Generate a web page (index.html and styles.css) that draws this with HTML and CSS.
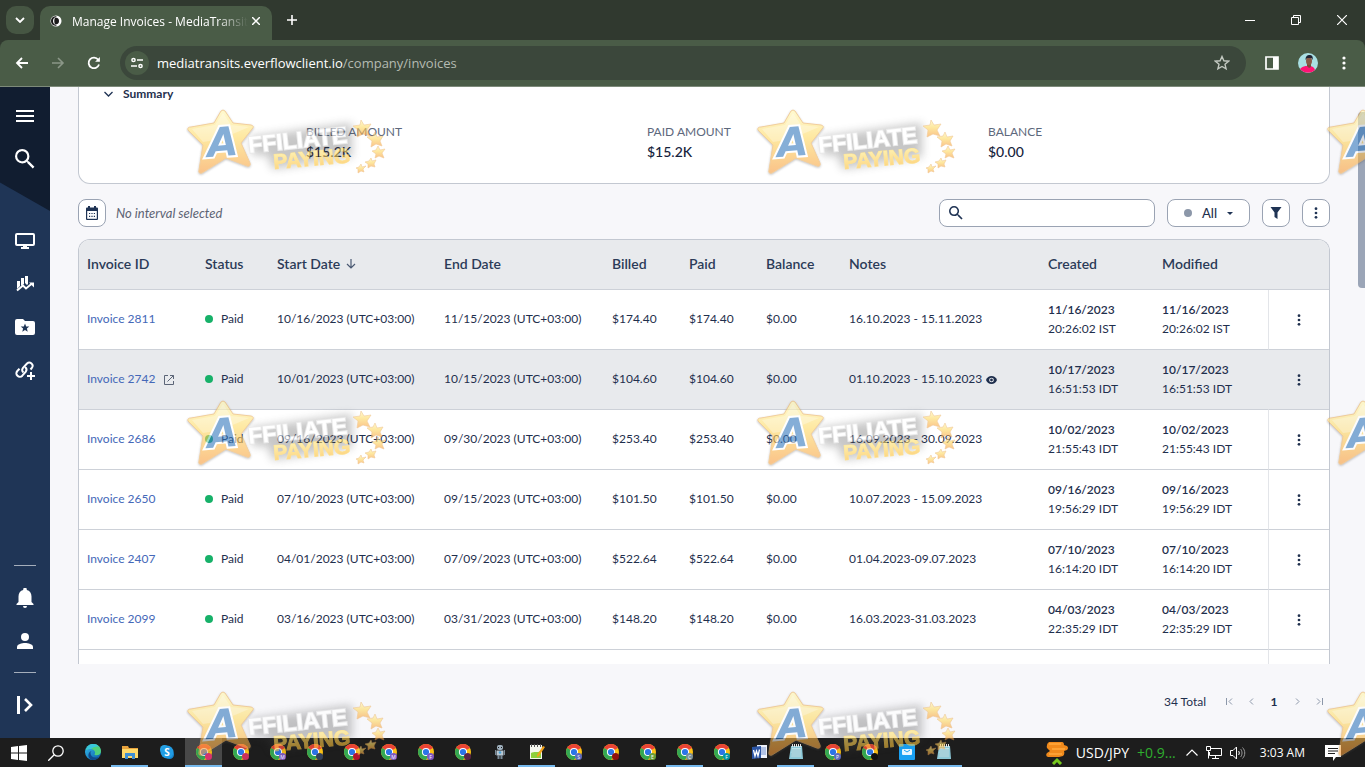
FILE: index.html
```html
<!DOCTYPE html>
<html lang="en">
<head>
  <meta charset="UTF-8">
  <meta name="viewport" content="width=device-width, initial-scale=1.0">
  <title>Manage Invoices - MediaTransits</title>
  <link rel="stylesheet" href="styles.css">
</head>
<body>
  <!-- Shared icons -->
  <svg class="defs" width="0" height="0" aria-hidden="true">
    <defs>
      <linearGradient id="gold" x1="0" y1="0" x2="0" y2="1">
        <stop offset="0" stop-color="#fff6b0"/>
        <stop offset="0.45" stop-color="#fdd860"/>
        <stop offset="1" stop-color="#f79a3a"/>
      </linearGradient>
      <linearGradient id="goldText" x1="0" y1="0" x2="0" y2="1">
        <stop offset="0" stop-color="#fff08a"/>
        <stop offset="1" stop-color="#fbb324"/>
      </linearGradient>
      <linearGradient id="edgeBlue" x1="0" y1="0" x2="1" y2="1">
        <stop offset="0" stop-color="#35c1f1"/>
        <stop offset="1" stop-color="#0c59a4"/>
      </linearGradient>
      <filter id="soft" x="-20%" y="-50%" width="140%" height="200%"><feGaussianBlur stdDeviation="5"/></filter>
      <filter id="shade" x="-20%" y="-20%" width="140%" height="140%"><feDropShadow dx="0" dy="1" stdDeviation="1" flood-color="#555" flood-opacity="0.6"/></filter>
      <symbol id="dots" viewBox="0 0 4 14"><circle cx="2" cy="2" r="1.6"/><circle cx="2" cy="7" r="1.6"/><circle cx="2" cy="12" r="1.6"/></symbol>
      <symbol id="search" viewBox="3 3 18 18"><path d="M15.5 14h-.79l-.28-.27A6.47 6.47 0 0 0 16 9.5 6.5 6.5 0 1 0 9.5 16c1.61 0 3.09-.59 4.23-1.57l.27.28v.79l5 4.99L20.49 19l-4.99-5zm-6 0C7.01 14 5 11.99 5 9.5S7.01 5 9.5 5 14 7.01 14 9.5 11.99 14 9.5 14z"/></symbol>
      <symbol id="chrome" viewBox="0 0 16 16">
        <circle cx="8" cy="8" r="8" fill="#fbc116"/>
        <path d="M8 8 1.1 4A8 8 0 0 1 14.9 4z" fill="#ea4335"/>
        <path d="M1.1 4A8 8 0 0 0 8 16l3.4-6-3.4-2z" fill="#34a853"/>
        <circle cx="8" cy="8" r="4.1" fill="#fff"/>
        <circle cx="8" cy="8" r="3.1" fill="#2b75e8"/>
      </symbol>
      <symbol id="edge" viewBox="0 0 16 16">
        <circle cx="8" cy="8" r="8" fill="url(#edgeBlue)"/>
        <path d="M1 6C2 2 5 0 8.500 0 13 0 16 3.500 16 7c0 3-2 4.300-4.500 4.300-1.300 0-2-.5-2-.9 0-.4.6-.7.6-1.800C10 6.500 8 5 5.500 5 3.500 5 2 5.500 1 6z" fill="#4fd07d"/>
        <path d="M1 6C2 2 5 0 8 0c3 0 5 1 6 3-2-1-6 0-8 2-2 0-4 0-5 1z" fill="#38c6dd"/>
        <path d="M5.500 9c0 3.500 3 5.500 8.500 4-2 2.500-5 3-7 2.900C4 15 2.500 12 4 9c.6-1.100 1.500-1.800 2.500-2C6 7.500 5.500 8 5.500 9z" fill="#114a8b"/>
      </symbol>
      <symbol id="folder" viewBox="0 0 16 16">
        <path d="M0 2h6l1 2h9v10H0z" fill="#e8a33d"/>
        <path d="M0 5h16v9H0z" fill="#ffd96a"/>
        <path d="M3 9h10v6h-3v-3H6v3H3z" fill="#3f8fd2"/>
      </symbol>
      <symbol id="skype" viewBox="0 0 16 16"><circle cx="5.500" cy="5.500" r="4.500" fill="#2aa5e6"/><circle cx="10.500" cy="10.500" r="4.500" fill="#1687d0"/><circle cx="8" cy="8" r="6.500" fill="#219ce4"/></symbol>
      <symbol id="robot" viewBox="0 0 16 16"><rect x="5" y="1" width="6" height="5" rx="2" fill="#9fb0bd"/><path d="M6 3h1v1H6zM9 3h1v1H9z" fill="#1d1d1d"/><path d="M4.500 6.500h7v5h-7z" fill="#b9c7d1"/><circle cx="8" cy="8.500" r="1.300" fill="#49a2d6"/><path d="M3 6h1v5H3zM12 6h1v5h-1zM5.500 11h2v4h-2zM8.500 11h2v4h-2z" fill="#7b8b98"/></symbol>
      <symbol id="npp" viewBox="0 0 16 16"><path d="M1 1h12v14H1z" fill="#f4f6ee"/><path d="M2 9c3-2 6 0 10-2v7H2z" fill="#8ecf3c"/><path d="M2 0h1v3H2zM5 0h1v3H5zM8 0h1v3H8zM11 0h1v3h-1z" fill="#555"/><path d="m14 2 2 1-6 9-2 1v-2z" fill="#f2a21b"/></symbol>
      <symbol id="word" viewBox="0 0 16 16"><path d="M6 1h10v13H6z" fill="#eef2fb"/><path d="M8 4h7M8 6h7M8 8h7M8 10h7" stroke="#7794cf"/><path d="m1 3 9-1v12l-9 1z" fill="#2c55a4"/><path d="m2.500 6 1.500 6 1.500-5L7 12l1.500-6.500" fill="none" stroke="#fff" stroke-width="1.300"/></symbol>
      <symbol id="notepad" viewBox="0 0 16 16"><path d="M3 2h11l1 13H1z" fill="#8ec9d8"/><path d="M4 4h9v9H3z" fill="#bfe3ea"/><path d="M4 6h9M4 8h9M3 10h10M3 12h10" stroke="#6ea9ba" stroke-width=".6"/><path d="M4 0h1v3H4zM6 0h1v3H6zM8 0h1v3H8zM10 0h1v3h-1zM12 0h1v3h-1z" fill="#e8e8e8"/></symbol>
      <symbol id="mail" viewBox="0 0 16 16"><rect width="16" height="16" rx="1" fill="#1aa1f3"/><rect x="3" y="5" width="10" height="6" rx="1" fill="#e8f6ff"/><path d="m5 6 3 2 3-2" fill="none" stroke="#1aa1f3"/></symbol>
    </defs>
  </svg>

  <!-- Browser tabs -->
  <header class="tab-strip">
    <button class="tab-search" aria-label="Search tabs"><svg width="10" height="6" viewBox="0 0 10 6"><path d="m1 1 4 4 4-4" fill="none" stroke="#fff" stroke-width="1.800"/></svg></button>
    <div class="tab">
      <svg width="12" height="12" viewBox="0 0 12 12"><circle cx="6" cy="6" r="5.500" fill="#fff"/><path d="M7 1.500C4 2 3 4 3 6s1 4 4 4.500C3 11.500 1 9 1 6s2-5.500 6-4.500z" fill="#1a1a1a"/><path d="M5 2.500c3 0 4 1.500 4 3.500S8 9.500 5 9.500c-1-2-1-5 0-7z" fill="#1a1a1a"/></svg>
      <span class="tab-title">Manage Invoices - MediaTransit</span>
      <button aria-label="Close tab"><svg width="8" height="8" viewBox="0 0 8 8"><path d="m0 0 8 8M8 0 0 8" stroke="#fff" stroke-width="1.500"/></svg></button>
    </div>
    <button class="new-tab" aria-label="New tab"><svg width="10" height="10" viewBox="0 0 10 10"><path d="M5 0v10M0 5h10" stroke="#fff" stroke-width="1.600"/></svg></button>
    <div class="window-buttons">
      <button aria-label="Minimize"><svg width="10" height="10" viewBox="0 0 10 10"><path d="M0 5.500h10" stroke="#fff"/></svg></button>
      <button aria-label="Restore"><svg width="10" height="10" viewBox="0 0 10 10"><path d="M.5 2.500h7v7h-7zM2.500 2.500v-2h7v7h-2" fill="none" stroke="#fff"/></svg></button>
      <button aria-label="Close"><svg width="10" height="10" viewBox="0 0 10 10"><path d="m0 0 10 10M10 0 0 10" stroke="#fff" stroke-width="1.200"/></svg></button>
    </div>
  </header>

  <!-- Address bar -->
  <div class="toolbar">
    <button aria-label="Back"><svg width="14" height="12" viewBox="0 0 14 12"><path d="M13 6H2M7 1 2 6l5 5" fill="none" stroke="#fff" stroke-width="1.800"/></svg></button>
    <button aria-label="Forward"><svg width="14" height="12" viewBox="0 0 14 12"><path d="M1 6h11M7 1l5 5-5 5" fill="none" stroke="#8b9788" stroke-width="1.600"/></svg></button>
    <button aria-label="Reload"><svg width="14" height="14" viewBox="0 0 14 14"><path d="M12 8.500A5.300 5.300 0 1 1 11.200 3.700" fill="none" stroke="#fff" stroke-width="1.800"/><path d="M12.900 1v4.800H8.100z" fill="#fff"/></svg></button>
    <div class="address">
      <button class="site-info" aria-label="Site information"><svg width="12" height="12" viewBox="0 0 12 12" fill="none" stroke="#fff" stroke-width="1.500"><circle cx="2.500" cy="3" r="1.600"/><path d="M6 3h6M0 9h6"/><circle cx="9.500" cy="9" r="1.600"/></svg></button>
      <span class="url">mediatransits.everflowclient.io<span>/company/invoices</span></span>
      <button class="bookmark" aria-label="Bookmark"><svg width="16" height="16" viewBox="0 0 16 16"><path d="m8 1.500 1.900 4.300 4.700.4-3.600 3.100 1.100 4.600L8 11.500l-4.100 2.400L5 9.300 1.400 6.200l4.700-.4z" fill="none" stroke="#c3c9c1" stroke-width="1.400"/></svg></button>
    </div>
    <button aria-label="Side panel"><svg width="14" height="14" viewBox="0 0 14 14"><path d="M1 1h12v12H1z" fill="none" stroke="#fff" stroke-width="1.700"/><path d="M8 1h5v12H8z" fill="#fff"/></svg></button>
    <button aria-label="Profile"><svg width="20" height="20" viewBox="0 0 20 20"><circle cx="10" cy="10" r="10" fill="#a9dfe3"/><path d="M2 16c3-3 5-3 7-3h3c2 0 4 1 5 4a10 10 0 0 1-14 0z" fill="#ff1374"/><path d="M9 10h4v4l-2 1-2-2z" fill="#7a4a3a"/><ellipse cx="11" cy="8" rx="3" ry="4" fill="#8a5a48"/><path d="M7.500 7c0-4 2-5 4-5s4 1 3 5l-1-2H9z" fill="#202334"/></svg></button>
    <button aria-label="Browser menu"><svg width="4" height="14" fill="#fff"><use href="#dots"/></svg></button>
  </div>

  <div class="page">
    <!-- Sidebar -->
    <nav class="sidebar">
      <div class="sidebar-top">
        <button aria-label="Menu"><svg width="18" height="12" viewBox="0 0 18 12"><path d="M0 1h18M0 6h18M0 11h18" stroke="#fff" stroke-width="2"/></svg></button>
        <button aria-label="Search"><svg width="20" height="20" fill="#fff"><use href="#search"/></svg></button>
      </div>
      <div class="sidebar-links">
        <button aria-label="Dashboard"><svg width="20" height="18" viewBox="0 0 20 18"><path d="M2 2h16a1 1 0 0 1 1 1v9a1 1 0 0 1-1 1H2a1 1 0 0 1-1-1V3a1 1 0 0 1 1-1z" fill="none" stroke="#fff" stroke-width="2"/><path d="M8 13h4v2h2v2H6v-2h2z" fill="#fff"/></svg></button>
        <button aria-label="Reporting"><svg width="18" height="16" viewBox="0 0 18 16"><path d="M1 5h3v5l-3 3zM5 2h3v6L5 10zM9 0h3v8l-1 1-2-2z" fill="#fff"/><path d="m1 14.500 6-5 3 3 6-5" fill="none" stroke="#fff" stroke-width="2"/><path d="M13 6.500h5v5z" fill="#fff"/></svg></button>
        <button aria-label="Offers"><svg width="20" height="16" viewBox="0 0 20 16"><path d="M2 0h6l2 2h8a2 2 0 0 1 2 2v10a2 2 0 0 1-2 2H2a2 2 0 0 1-2-2V2a2 2 0 0 1 2-2z" fill="#fff"/><path d="m10 4.500 1.200 2.900 3.100.2-2.400 2 .8 3.100-2.700-1.700-2.700 1.700.8-3.100-2.400-2 3.100-.2z" fill="#1f3556"/></svg></button>
        <button aria-label="Links"><svg width="20" height="20" viewBox="0 0 20 20" fill="none" stroke="#fff" stroke-width="2"><path d="M8.500 12.500a3.500 3.500 0 0 1-.5-4.700l4-4.300a3.300 3.300 0 0 1 4.800 4.500L15.500 9.500"/><path d="M10 7a3.500 3.500 0 0 1 .8 4.700l-3.500 4A3.300 3.300 0 0 1 2.300 11L4.500 8.700"/><path d="M16 12v8M12 16h8"/></svg></button>
      </div>
      <div class="sidebar-bottom">
        <hr>
        <button aria-label="Notifications"><svg width="18" height="20" viewBox="0 0 18 20"><path d="M9 20a2 2 0 0 0 2-2H7a2 2 0 0 0 2 2zm6.500-6V8.500c0-3.300-1.700-5.800-4.700-6.500V1.500a1.800 1.800 0 0 0-3.600 0V2C4.200 2.700 2.500 5.200 2.500 8.500V14l-2 2v1h17v-1z" fill="#fff"/></svg></button>
        <button aria-label="Account"><svg width="16" height="16" viewBox="0 0 16 16"><circle cx="8" cy="4" r="4" fill="#fff"/><path d="M0 16v-2c0-3 5-4 8-4s8 1 8 4v2z" fill="#fff"/></svg></button>
        <hr>
        <button aria-label="Expand"><svg width="16" height="18" viewBox="0 0 16 18" fill="none" stroke="#fff"><path d="M1.500 0v18" stroke-width="3"/><path d="m8 3 6 6-6 6" stroke-width="2.600"/></svg></button>
      </div>
    </nav>

    <main class="content">
      <section class="summary">
        <button class="summary-toggle"><svg width="9" height="6" viewBox="0 0 9 6"><path d="m.5 1 4 4 4-4" fill="none" stroke="#1f3354" stroke-width="1.300"/></svg>Summary</button>
        <dl class="amounts">
          <div><dt>BILLED AMOUNT</dt><dd>$15.2K</dd></div>
          <div><dt>PAID AMOUNT</dt><dd>$15.2K</dd></div>
          <div><dt>BALANCE</dt><dd>$0.00</dd></div>
        </dl>
      </section>

      <div class="filters">
        <button class="box" aria-label="Select interval"><svg width="12" height="14" viewBox="0 0 12 14"><path d="M2 0h2v1.500h4V0h2v1.500h1a1 1 0 0 1 1 1V13a1 1 0 0 1-1 1H1a1 1 0 0 1-1-1V2.500a1 1 0 0 1 1-1h1z" fill="#1f3354"/><path d="M1.200 5h9.600v7.800H1.200z" fill="#fff"/><path d="M3 7.500h1.200m1.200 0h1.200m1.200 0H9M3 10.300h1.200m1.200 0h1.200m1.200 0H9" stroke="#1f3354" stroke-width="1.200"/></svg></button>
        <em>No interval selected</em>
        <label class="search-box">
          <svg width="14" height="14" fill="#1f3354"><use href="#search"/></svg>
          <input type="text" aria-label="Search invoices">
        </label>
        <button class="box status-filter"><i></i>All<svg width="6" height="3" viewBox="0 0 6 3"><path d="M0 0h6L3 3z" fill="#1f3354"/></svg></button>
        <button class="box" aria-label="Filter"><svg width="12" height="12" viewBox="0 0 12 12"><path d="M.5 0h11L7.500 5.500V12l-3-2V5.500z" fill="#1f3354"/></svg></button>
        <button class="box" aria-label="More actions"><svg width="4" height="12" fill="#1f3354"><use href="#dots"/></svg></button>
      </div>

      <div class="table-wrap">
        <table id="invoiceTable">
          <colgroup>
            <col class="c-id"><col class="c-status"><col class="c-start"><col class="c-end"><col class="c-money"><col class="c-money"><col class="c-balance"><col><col class="c-date"><col class="c-date"><col class="c-menu">
          </colgroup>
          <thead>
            <tr>
              <th>Invoice ID</th>
              <th>Status</th>
              <th>Start Date <svg class="sort-icon" width="10" height="10" viewBox="0 0 10 10"><path d="M5 0v9M1 5l4 4 4-4" fill="none" stroke="#4a5972" stroke-width="1.200"/></svg></th>
              <th>End Date</th>
              <th>Billed</th>
              <th>Paid</th>
              <th>Balance</th>
              <th>Notes</th>
              <th>Created</th>
              <th>Modified</th>
              <th></th>
            </tr>
          </thead>
          <tbody></tbody>
        </table>
      </div>

      <footer class="pager">
        <span>34 Total</span>
        <button aria-label="First page"><svg width="7" height="7" viewBox="0 0 7 7"><path d="M.5 0v7M6 .5l-3 3 3 3"/></svg></button>
        <button aria-label="Previous page"><svg width="7" height="7" viewBox="0 0 7 7"><path d="m5 .5-3 3 3 3"/></svg></button>
        <button class="current">1</button>
        <button aria-label="Next page"><svg width="7" height="7" viewBox="0 0 7 7"><path d="m2 .5 3 3-3 3"/></svg></button>
        <button aria-label="Last page"><svg width="7" height="7" viewBox="0 0 7 7"><path d="M6.500 0v7M1 .5l3 3-3 3"/></svg></button>
      </footer>
      <div class="scroll-thumb"></div>
    </main>
  </div>

  <!-- Taskbar -->
  <footer class="taskbar">
    <button aria-label="Start"><svg width="16" height="16" viewBox="0 0 16 16"><path d="m0 2 7-1v6.600H0zM8 1l8-1v7.600H8zM0 8.500h7V15l-7-1zM8 8.500h8V16l-8-1z" fill="#fff"/></svg></button>
    <button aria-label="Search"><svg width="16" height="16" viewBox="0 0 16 16" fill="none" stroke="#fff" stroke-width="1.300"><circle cx="10" cy="6" r="5.200"/><path d="m6.200 9.800-6 6"/></svg></button>
    <div class="apps" id="apps"></div>
    <div class="tray">
      <svg width="22" height="24" viewBox="0 0 22 24"><path d="M3 1h13q2 0 2 3l3 1q2 2 0 4l-3 1q1 3-1 5l-4 1H2q-3-1-1-4l3-2-3-3q-1-4 2-6z" fill="#f08a1c"/><path d="M3 3h12M6 8h13M3 13h13" stroke="#ffa93c" stroke-width="1.500"/><path d="m7 23 4-4 4 4" fill="none" stroke="#76c81e" stroke-width="3"/></svg>
      <span class="quote">USD/JPY</span>
      <span class="quote up">+0.9...</span>
      <svg width="12" height="7" viewBox="0 0 12 7"><path d="m.5 6.500 5.500-5.500 5.500 5.500" fill="none" stroke="#fff" stroke-width="1.200"/></svg>
      <svg width="16" height="14" viewBox="0 0 16 14" fill="none" stroke="#fff"><path d="M5 2.500h10.500v7H3.500V6M6 12.500h7M9.500 9.500v3M.5.500h4v4h-4zM2.500 4.500v8"/></svg>
      <svg width="16" height="14" viewBox="0 0 16 14" fill="none" stroke="#fff"><path d="M.5 4.500H3l3.500-3.500v12L3 9.500H.5zM8.500 5c1 1 1 3 0 4"/><path d="M10.500 3c2 2 2 6 0 8M12.500 1.500c3 3 3 8 0 11" stroke="#999"/></svg>
      <time>3:03 AM</time>
      <svg width="16" height="16" viewBox="0 0 16 16"><path d="M0 0h16v12h-5l-3 4v-4H0z" fill="#fff"/><path d="M3 3.500h10M3 6h10M3 8.500h7" stroke="#1d1d1d"/></svg>
    </div>
  </footer>

  <!-- Watermark tile, repeated over the whole screen -->
  <div class="watermarks" id="watermarks" aria-hidden="true"></div>
  <template id="watermark">
    <svg class="watermark" width="210" height="80" viewBox="0 0 210 80">
      <path d="M64 32 166 18v34L86 64l-4-14H66z" fill="#444" opacity="0.5" filter="url(#soft)"/>
      <path d="M35 6q2-2 4 0l8 12 18 2q4 1 1 4L55 38l9 20q1 4-3 3L40 53 16 68q-4 1-3-3l4-25L2 25q-1-3 3-3l23-4z" fill="url(#gold)" stroke="#e9ae5c" filter="url(#shade)"/>
      <path d="m37 8 8 12 18 2-14 6q-20 8-32 9L6 24l23-4z" fill="#fff" opacity="0.300"/>
      <text class="wm-top" transform="translate(63 48) rotate(-6)">FFILIATE</text>
      <text class="wm-bottom" transform="translate(88 64) rotate(-5)">PAYING</text>
      <text class="wm-a" transform="translate(22 52) rotate(-4)">A</text>
      <g fill="url(#gold)" stroke="#e8a552" stroke-width=".6">
        <path d="m175 15 3 5 7-1-4 6 3 6-7-2-6 3 1-7-5-4 7-1z"/>
        <path d="m189 27 2 5 6-1-3 5 2 5-6-2-5 3 1-6-5-4 6-1z"/>
        <path d="m192 41 2 4 5-1-3 4 2 5-5-2-4 2 1-4-4-3 4-1z"/>
        <path d="m185 53 1 3 4-1-2 4 1 3-4-1-3 2v-4l-3-2 4-1z"/>
        <path d="m175 59 1 3 4-1-3 3 1 3-3-1-3 2v-4l-2-1 3-1z"/>
      </g>
    </svg>
  </template>

  <script>
    const invoices = [
      { id: 2811, start: "10/16/2023", end: "11/15/2023", amount: "$174.40", notes: "16.10.2023 - 15.11.2023", date: "11/16/2023", time: "20:26:02 IST" },
      { id: 2742, start: "10/01/2023", end: "10/15/2023", amount: "$104.60", notes: "01.10.2023 - 15.10.2023", date: "10/17/2023", time: "16:51:53 IDT", active: true },
      { id: 2686, start: "09/16/2023", end: "09/30/2023", amount: "$253.40", notes: "16.09.2023 - 30.09.2023", date: "10/02/2023", time: "21:55:43 IDT" },
      { id: 2650, start: "07/10/2023", end: "09/15/2023", amount: "$101.50", notes: "10.07.2023 - 15.09.2023", date: "09/16/2023", time: "19:56:29 IDT" },
      { id: 2407, start: "04/01/2023", end: "07/09/2023", amount: "$522.64", notes: "01.04.2023-09.07.2023", date: "07/10/2023", time: "16:14:20 IDT" },
      { id: 2099, start: "03/16/2023", end: "03/31/2023", amount: "$148.20", notes: "16.03.2023-31.03.2023", date: "04/03/2023", time: "22:35:29 IDT" }
    ];

    const openIcon = '<svg class="open-icon" width="10" height="10" viewBox="0 0 10 10"><path d="M4 .500H.500v9h9V6M6 .500h3.500V4M9.500.500l-6 6" fill="none" stroke="#5b6577"/></svg>';
    const eyeIcon = '<svg class="eye-icon" width="11" height="8" viewBox="0 0 11 8"><path d="M5.500 0C3 0 1 1.500 0 4c1 2.500 3 4 5.500 4S10 6.500 11 4C10 1.500 8 0 5.500 0z" fill="#1f2f4d"/><circle cx="5.500" cy="4" r="2.300" fill="#fff"/><circle cx="5.500" cy="4" r="1.400" fill="#1f2f4d"/></svg>';
    const tbody = document.querySelector("#invoiceTable tbody");

    // Add one row per invoice
    invoices.forEach(item => {
      const row = tbody.insertRow();
      if (item.active) row.className = "active";
      row.innerHTML = `
        <td><a href="#">Invoice ${item.id}</a>${item.active ? openIcon : ""}</td>
        <td><i class="paid-dot"></i>Paid</td>
        <td>${item.start} (UTC+03:00)</td>
        <td>${item.end} (UTC+03:00)</td>
        <td>${item.amount}</td>
        <td>${item.amount}</td>
        <td>$0.00</td>
        <td>${item.notes}${item.active ? eyeIcon : ""}</td>
        <td><b>${item.date}</b>${item.time}</td>
        <td><b>${item.date}</b>${item.time}</td>
        <td class="menu-cell"><button aria-label="Invoice ${item.id} actions"><svg width="4" height="12" fill="#1f2f4d"><use href="#dots"/></svg></button></td>
      `;
    });
    // next row is cut off by the bottom of the table
    tbody.insertRow().innerHTML = "<td></td>".repeat(10) + '<td class="menu-cell"></td>';

    // icon, badge colour, badge letter, state
    const apps = [
      ["edge"], ["folder", "", "", "open"], ["skype", "", "S"],
      ["chrome", "#d8336f", "", "open focused"], ["chrome", "#c92f5c", ""], ["chrome", "#7e57c2", "M"],
      ["chrome", "#33415c", ""], ["chrome", "#b3142e", ""], ["chrome", "#7e57c2", "M"], ["chrome", "#7e57c2", "F"],
      ["chrome", "#5b2346", ""], ["robot"], ["npp", "", "", "open"], ["chrome", "#5c6bc0", "S"],
      ["chrome", "#8e1010", ""], ["chrome", "#689f38", "E"], ["chrome", "#78909c", "C", "open"], ["chrome", "#0097a7", "F"],
      ["word"], ["notepad", "", "", "open"], ["chrome", "#5c6bc0", "P"], ["chrome", "#111111", ""],
      ["mail", "", "", "open"], ["notepad", "", "", "open"]
    ];
    document.getElementById("apps").innerHTML = apps.map(([icon, color, letter, state]) => `
      <button class="app ${state || ""}" aria-label="${icon}">
        <svg width="18" height="18" viewBox="0 0 18 18">
          <use href="#${icon}" x="1" y="1" width="16" height="16"/>
          ${color ? `<circle cx="13.500" cy="13.500" r="3.500" fill="${color}"/>` : ""}
          ${icon === "chrome" && letter ? `<text class="badge" x="13.500" y="15.500">${letter}</text>` : ""}
          ${icon === "skype" ? `<text class="skype-s" x="9" y="13">S</text>` : ""}
        </svg>
      </button>`).join("");

    const tile = document.getElementById("watermark");
    for (let i = 0; i < 9; i++) {
      document.getElementById("watermarks").appendChild(tile.content.cloneNode(true));
    }
    // only the star of the last column fits on screen
    document.querySelectorAll(".watermark:nth-child(3n) :is(.wm-top, .wm-bottom)").forEach(text => text.remove());
  </script>
</body>
</html>
```
FILE: styles.css
```css
* {
  box-sizing: border-box;
}

body {
  margin: 0;
  height: 100vh;
  display: flex;
  flex-direction: column;
  overflow: hidden;
  background-color: #30392f;
  font-family: Lato, sans-serif;
  font-size: 12px;
  color: #1f2f4d;
}

button {
  display: flex;
  align-items: center;
  justify-content: center;
  padding: 0;
  border: none;
  background: none;
  font: inherit;
  color: inherit;
  cursor: pointer;
}

svg {
  flex: none;
}

.defs {
  position: absolute;
}

/* Browser window */
.tab-strip {
  display: flex;
  height: 40px;
  flex: none;
  padding-left: 6px;
  color: #fff;
  font-family: "Open Sans", sans-serif;
}

.tab-search {
  width: 28px;
  height: 28px;
  margin-top: 6px;
  border-radius: 10px;
  background-color: #465643;
}

.tab {
  display: flex;
  align-items: center;
  gap: 10px;
  width: 232px;
  height: 34px;
  margin: 6px 0 0 6px;
  padding: 0 12px 4px 10px;
  border-radius: 10px 10px 0 0;
  background-color: #4a5c47;
}

.tab-title {
  flex: 1;
  min-width: 0;
  margin-right: -6px;
  overflow: hidden;
  white-space: nowrap;
  mask-image: linear-gradient(to right, #000 82%, transparent);
}

.new-tab {
  width: 40px;
}

.window-buttons {
  display: flex;
  margin-left: auto;
}

.window-buttons button {
  width: 46px;
}

.toolbar {
  display: flex;
  align-items: center;
  height: 47px;
  flex: none;
  padding: 0 3px 0 4px;
  background-color: #4a5c47;
  border-bottom: 1px solid #7d8a7a;
  border-radius: 8px 8px 0 0;
  font-family: "Open Sans", sans-serif;
  font-size: 13px;
}

.toolbar > button {
  width: 36px;
  height: 34px;
}

.address {
  display: flex;
  flex: 1;
  align-items: center;
  height: 34px;
  margin: 0 8px;
  padding: 0 16px 0 5px;
  border-radius: 17px;
  background-color: #3b473b;
  color: #fff;
}

.site-info {
  width: 24px;
  height: 24px;
  border-radius: 50%;
  background-color: #4a5c47;
}

.url {
  flex: 1;
  margin-left: 8px;
}

.url span {
  color: #b4bbb2;
}

/* Application */
.page {
  display: flex;
  flex: 1;
  min-height: 0;
  background-color: #f7f7fa;
}

.sidebar {
  display: flex;
  flex-direction: column;
  width: 50px;
  flex: none;
  background-color: #1f3556;
}

.sidebar button {
  width: 50px;
  height: 43px;
}

.sidebar-top {
  height: 124px;
  padding-top: 7px;
  background-color: #111d30;
  clip-path: polygon(0 0, 100% 0, 100% 100%, 0 77%);
}

.sidebar-links {
  padding-top: 8px;
}

.sidebar-bottom {
  margin-top: auto;
  padding-bottom: 12px;
}

.sidebar hr {
  width: 22px;
  height: 1px;
  margin: 10px auto;
  border: none;
  background-color: #a5aebb;
}

.content {
  position: relative;
  display: flex;
  flex: 1;
  flex-direction: column;
  min-width: 0;
  padding: 0 35px 0 28px;
}

.summary {
  height: 97px;
  flex: none;
  border: 1px solid #c3c8d1;
  border-top: none;
  border-radius: 0 0 12px 12px;
  background-color: #fff;
}

.summary-toggle {
  gap: 10px;
  margin-left: 25px;
  line-height: 14px;
  font-weight: 700;
}

.amounts {
  display: grid;
  grid-template-columns: repeat(3, 1fr);
  margin: 21px 0 0;
  padding-left: 227px;
}

.amounts dt {
  line-height: 20px;
  color: #5d687c;
}

.amounts dd {
  margin: 0;
  font-size: 14px;
  line-height: 20px;
  font-weight: 500;
  color: #16233c;
}

.filters {
  display: flex;
  align-items: center;
  gap: 12px;
  margin: 15px 0 12px;
  font-size: 13px;
}

.filters em {
  flex: 1;
  margin-left: -2px;
  color: #5d6474;
}

.box {
  width: 28px;
  height: 28px;
  border: 1px solid #9aa3b3;
  border-radius: 8px;
  background-color: #fff;
}

.status-filter {
  gap: 10px;
  width: 83px;
  font-weight: 500;
}

.status-filter i {
  width: 8px;
  height: 8px;
  border-radius: 50%;
  background-color: #8c97a9;
}

.search-box {
  display: flex;
  align-items: center;
  width: 216px;
  height: 28px;
  padding: 0 9px;
  border: 1px solid #9aa3b3;
  border-radius: 8px;
  background-color: #fff;
}

.search-box input {
  flex: 1;
  min-width: 0;
  border: none;
  outline: none;
  background: none;
  font: inherit;
}

/* Invoice table */
.table-wrap {
  flex: 1;
  min-height: 0;
  overflow: hidden;
  border: 1px solid #c3c8d1;
  border-bottom: none;
  border-radius: 12px 12px 0 0;
  background-color: #fff;
}

table {
  width: 100%;
  table-layout: fixed;
  border-collapse: separate;
  border-spacing: 0;
}

.c-id { width: 118px; }
.c-status { width: 72px; }
.c-start { width: 167px; }
.c-end { width: 168px; }
.c-money { width: 77px; }
.c-balance { width: 83px; }
.c-date { width: 114px; }
.c-menu { width: 61px; }

th, td {
  padding: 0 8px 2px;
  border-bottom: 1px solid #cdd1d8;
  text-align: left;
  white-space: nowrap;
}

th {
  height: 50px;
  background-color: #e8eaed;
  font-size: 14px;
  font-weight: 600;
  color: #2b3b58;
}

td {
  height: 60px;
  line-height: 19px;
}

td b {
  display: block;
  font-weight: 600;
}

td a {
  color: #4468b8;
  text-decoration: none;
}

.active td {
  background-color: #e8eaed;
}

.sort-icon {
  margin-left: 2px;
}

.open-icon {
  margin-left: 9px;
  vertical-align: -2px;
}

.eye-icon {
  margin-left: 4px;
  vertical-align: -1px;
}

.paid-dot {
  display: inline-block;
  width: 8px;
  height: 8px;
  margin-right: 8px;
  border-radius: 50%;
  background-color: #17b169;
}

.menu-cell {
  padding-bottom: 0;
  border-left: 1px solid #e3e5e9;
}

.active .menu-cell {
  border-left-color: #e8eaed;
}

.menu-cell button {
  width: 100%;
  height: 28px;
}

.pager {
  display: flex;
  align-items: center;
  justify-content: flex-end;
  height: 74px;
  flex: none;
}

.pager span {
  margin-right: 12px;
}

.pager button {
  width: 22px;
  height: 22px;
}

.pager .current {
  width: 24px;
  font-weight: 700;
}

.pager svg {
  fill: none;
  stroke: #8c97a9;
}

.scroll-thumb {
  position: absolute;
  top: 25px;
  right: 0;
  width: 7px;
  height: 176px;
  border-radius: 4px 0 0 4px;
  background-color: #9ba5b7;
}

/* Taskbar */
.taskbar {
  display: flex;
  height: 29px;
  flex: none;
  background-color: #1d1d1d;
  color: #fff;
  font-family: "Open Sans", sans-serif;
}

.taskbar > button {
  width: 37px;
}

.apps {
  display: flex;
}

.app {
  width: 37px;
  border-bottom: 2px solid transparent;
}

.open {
  border-bottom-color: #76b9ed;
}

.focused {
  background-color: #484848;
}

.badge {
  font-size: 5px;
  text-anchor: middle;
  fill: #fff;
}

.skype-s {
  font-size: 10px;
  font-weight: 700;
  text-anchor: middle;
  fill: #fff;
}

.tray {
  display: flex;
  align-items: center;
  gap: 8px;
  margin-left: auto;
  padding-right: 24px;
}

.quote {
  font-size: 14px;
}

.up {
  margin-right: 2px;
  color: #2fae2f;
}

.tray time {
  margin: 0 12px 0 6px;
}

/* Watermark */
.watermarks {
  position: fixed;
  inset: 0;
  display: grid;
  grid-template-columns: repeat(3, 570px);
  grid-auto-rows: 291px;
  padding: 105px 0 0 186px;
  overflow: hidden;
  opacity: 0.6;
  pointer-events: none;
}

.watermark text {
  font-family: "Liberation Sans", sans-serif;
  font-weight: 700;
  paint-order: stroke;
}

.watermark .wm-a {
  font-family: "DejaVu Sans", sans-serif;
  font-size: 40px;
  font-style: italic;
  fill: #3579bd;
  stroke: #fff;
  stroke-width: 4px;
}

.wm-top {
  font-size: 23px;
  fill: #fff;
  stroke: #ddd;
  stroke-width: 2px;
}

.wm-bottom {
  font-size: 21px;
  fill: url(#goldText);
  stroke: #fdd14e;
  stroke-width: 1px;
}
```
